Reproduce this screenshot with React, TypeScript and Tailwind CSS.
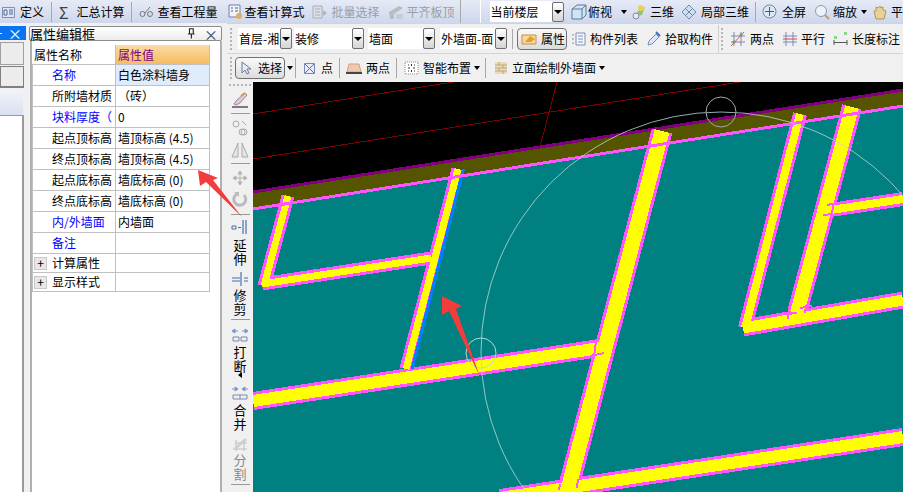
import type { ReactNode } from 'react'
import clsx from 'clsx'

const Sep = ({ className }: { className?: string }) => (
  <div className={clsx('w-px h-[20px] shrink-0 bg-[#a8a8a8]', className)} />
)

const Grip = ({ className }: { className?: string }) => (
  <div className={clsx('flex flex-col gap-[2px] shrink-0 w-[3px]', className)}>
    {[0, 1, 2, 3, 4, 5].map((i) => (
      <div key={i} className="size-[2px] bg-[#b4b4b4]" />
    ))}
  </div>
)

const Ico = ({ w = 16, children, className }: { w?: number; children: ReactNode; className?: string }) => (
  <svg width={w} height={16} viewBox={`0 0 ${w} 16`} className={clsx('shrink-0', className)} fill="none">
    {children}
  </svg>
)

const Caret = ({ className }: { className?: string }) => (
  <div className={clsx('shrink-0 border-x-[3px] border-t-[4px] border-x-transparent border-t-black', className)} />
)

const Combo = ({ label, width, className }: { label: string; width: string; className?: string }) => (
  <div className={clsx('flex items-center shrink-0', className)}>
    <div className={clsx('h-[21px] bg-white flex items-center pl-[1px] overflow-hidden whitespace-nowrap', width)}>{label}</div>
    <div className="w-[12px] h-[21px] border border-[#707070] rounded-[2px] bg-gradient-to-b from-white to-[#d4d4d4] flex items-center justify-center">
      <Caret className="border-x-[4px]" />
    </div>
  </div>
)

const rows: { name: string; value: string; blue?: boolean; h: string; plus?: boolean; tint?: boolean }[] = [
  { name: '名称', value: '白色涂料墙身', blue: true, h: 'h-[21px]', tint: true },
  { name: '所附墙材质', value: '（砖）', h: 'h-[21px]' },
  { name: '块料厚度（', value: '0', blue: true, h: 'h-[21px]' },
  { name: '起点顶标高', value: '墙顶标高 (4.5)', h: 'h-[21px]' },
  { name: '终点顶标高', value: '墙顶标高 (4.5)', h: 'h-[21px]' },
  { name: '起点底标高', value: '墙底标高 (0)', h: 'h-[21px]' },
  { name: '终点底标高', value: '墙底标高 (0)', h: 'h-[21px]' },
  { name: '内/外墙面', value: '内墙面', blue: true, h: 'h-[21px]' },
  { name: '备注', value: '', blue: true, h: 'h-[21px]' },
  { name: '计算属性', value: '', h: 'h-[19px]', plus: true },
  { name: '显示样式', value: '', h: 'h-[19px]', plus: true },
]

const PropertyTable = () => (
  <div className="w-[178px] border-r border-[#c0c0c0] text-[12px] leading-none">
    <div className="flex h-[20px] border-b border-[#c0c0c0]">
      <div className="w-[84px] pl-[2px] flex items-center border-r border-[#c0c0c0]">属性名称</div>
      <div className="flex-1 pl-[2px] flex items-center text-[#800080] bg-gradient-to-b from-[#fbdca4] to-[#f4bd5f]">属性值</div>
    </div>
    {rows.map((r) => (
      <div key={r.name} className={clsx('flex border-b border-[#c0c0c0] border-l', r.h)}>
        <div className={clsx('w-[83px] shrink-0 flex items-center border-r border-[#c0c0c0] overflow-hidden whitespace-nowrap', r.plus ? 'pl-[1px]' : 'pl-[19px]', r.blue && 'text-[#0000ff]')}>
          {r.plus && (
            <div className="size-[13px] mr-[5px] shrink-0 bg-[#e8e8e8] border border-[#c8c8c8] flex items-center justify-center text-[12px]">+</div>
          )}
          {r.name}
        </div>
        <div className={clsx('flex-1 pl-[2px] flex items-center whitespace-nowrap', r.tint && 'bg-[#deecfb]')}>{r.value}</div>
      </div>
    ))}
  </div>
)

const SideText = ({ text, dim, className }: { text: string; dim?: boolean; className?: string }) => (
  <div className={clsx('w-[13px] text-[13px] leading-[14px] text-center', dim && 'text-[#8a8a8a]', className)}>{text}</div>
)

const SideSep = ({ className }: { className?: string }) => <div className={clsx('w-[19px] h-px shrink-0 bg-[#9a9a9a]', className)} />

const SideToolbar = () => (
  <div className="w-[26px] shrink-0 flex flex-col items-center bg-[#f0f0f0]">
    <div className="mt-[2px] flex gap-[2px]">
      {[0, 1, 2, 3, 4, 5].map((i) => (
        <div key={i} className="size-[2px] bg-[#b4b4b4]" />
      ))}
    </div>
    <Ico w={18} className="mt-[6px]">
      <path d="M3 12l3-4 8-7 2 2-7 8-4 2z" fill="#e9c7d2" stroke="#8a8aa8" />
      <path d="M1 15h16" stroke="#555" strokeWidth="1.5" />
      <path d="M10 4l4-3" stroke="#c8a040" strokeWidth="2" />
    </Ico>
    <SideSep className="mt-[5px]" />
    <Ico w={18} className="mt-[6px]">
      <circle cx="5" cy="4" r="3" stroke="#aaa" />
      <circle cx="11" cy="12" r="3" stroke="#aaa" />
      <circle cx="13" cy="12" r="3" stroke="#aaa" />
      <path d="M11 1l4 4" stroke="#aaa" />
    </Ico>
    <Ico w={18} className="mt-[6px]">
      <path d="M7 1L1 15h6zM11 1l6 14h-6z" stroke="#aaa" fill="#e4e4e4" />
    </Ico>
    <SideSep className="mt-[5px]" />
    <Ico w={16} className="mt-[6px]">
      <path d="M8 1v14M1 8h14M8 1L6 4h4zM8 15l-2-3h4zM1 8l3-2v4zM15 8l-3-2v4z" stroke="#b4b4b4" fill="#b4b4b4" />
    </Ico>
    <Ico w={16} className="mt-[5px]">
      <path d="M5 3a6 6 0 1 0 7 1" stroke="#bbb" strokeWidth="3" />
      <path d="M2 1h5v5z" fill="#bbb" />
    </Ico>
    <SideSep className="mt-[7px]" />
    <Ico w={18} className="mt-[4px]">
      <path d="M1 7h4v3H1zM7 8.5h3" stroke="#4a6aa8" />
      <path d="M12 1v14M15 1v14" stroke="#6a8ac0" strokeWidth="1.5" />
    </Ico>
    <SideText text="延伸" className="mt-[3px]" />
    <Ico w={18} className="mt-[5px]">
      <path d="M1 7h8M1 10h8M13 7h4M13 10h4" stroke="#4a6aa8" />
      <path d="M10 1v14" stroke="#6a8ac0" strokeWidth="1.5" />
    </Ico>
    <SideText text="修剪" className="mt-[1px]" />
    <SideSep className="mt-[3px]" />
    <Ico w={18} className="mt-[8px]">
      <path d="M1 3h6M17 3h-6M1 3l3-2v4zM17 3l-3-2v4z" stroke="#7a9ad0" fill="#7a9ad0" />
      <path d="M2 9h6v4H2zM10 9h6v4h-6z" stroke="#7a8ab0" />
    </Ico>
    <SideText text="打断" className="mt-[1px]" />
    <div className="size-0 border-y-[3px] border-r-[4px] border-y-transparent border-r-black -mt-[1px]" />
    <Ico w={18} className="mt-[8px]">
      <path d="M1 3h6M17 3h-6M7 3L4 1v4zM11 3l3-2v4z" stroke="#7a9ad0" fill="#7a9ad0" />
      <path d="M2 9h14v4H2zM9 9v4" stroke="#7a8ab0" />
    </Ico>
    <SideText text="合并" className="mt-[1px]" />
    <Ico w={18} className="mt-[5px]">
      <path d="M2 13h14M4 7h12M5 4v11M13 4v11" stroke="#c0c0c0" />
      <path d="M3 12L14 2l2 2-9 8z" fill="#cfcfcf" />
    </Ico>
    <SideText text="分割" dim className="mt-[1px]" />
    <SideSep className="mt-[3px]" />
  </div>
)

const walls: { pts: [number, number, number, number]; outer: number; inner: number }[] = [
  { pts: [288, 195, 264, 285], outer: 13, inner: 7 },
  { pts: [262, 283, 431, 257], outer: 13, inner: 7 },
  { pts: [458, 168, 406, 368], outer: 13, inner: 7 },
  { pts: [253, 400, 606, 346], outer: 18, inner: 12 },
  { pts: [662, 130, 567, 492], outer: 21, inner: 15 },
  { pts: [500, 497, 903, 436], outer: 18, inner: 12 },
  { pts: [800, 113, 745, 327], outer: 14, inner: 8 },
  { pts: [852, 106, 797, 312], outer: 20, inner: 14 },
  { pts: [743, 327, 903, 299], outer: 17, inner: 11 },
  { pts: [824, 210, 903, 198], outer: 14, inner: 8 },
]

const ticks = 'M590 355L604 352M596 340L594 356M800 307L812 305M806 304L805 312M788 313L797 312M788 313V318M827 204L837 202M823 214L833 213M833 203L832 215M560 483L559 489M578 478L577 487'

const Canvas = () => (
  <div className="flex-1 bg-black overflow-hidden">
    <svg width={650} height={411} viewBox="253 81 650 411" shapeRendering="crispEdges" className="block">
      <path d="M253 113L453 81M253 158L740 81M557 81L540 146" stroke="#800000" />
      <path d="M253 191L903 89V500H253z" fill="#008080" />
      <path d="M253 191L903 89V105L253 208z" fill="#555500" />
      <path d="M253 191L903 89" stroke="#800080" strokeWidth="3" />
      {walls.map(({ pts: [x1, y1, x2, y2], outer }) => (
        <line key={`${x1}-${y1}-o`} x1={x1} y1={y1} x2={x2} y2={y2} stroke="#ff55ff" strokeWidth={outer} />
      ))}
      {walls.map(({ pts: [x1, y1, x2, y2], inner }) => (
        <line key={`${x1}-${y1}-i`} x1={x1} y1={y1} x2={x2} y2={y2} stroke="#ffff00" strokeWidth={inner} />
      ))}
      <line x1={463.5} y1={168} x2={412} y2={368} stroke="#0080ff" strokeWidth={3} />
      <path d="M253 208L903 105" stroke="#ff55ff" strokeWidth="3" />
      <path d={ticks} stroke="#ff55ff" strokeWidth="2" />
      <g shapeRendering="auto">
        <circle cx={721} cy={351} r={240} stroke="#b8d8d8" fill="none" strokeWidth={0.8} />
        <circle cx={721} cy={111} r={15} stroke="#a8a8a8" fill="none" />
        <circle cx={481} cy={352} r={15} stroke="#b8d8d8" fill="none" />
      </g>
    </svg>
  </div>
)

const Arrows = () => (
  <svg width={903} height={492} viewBox="0 0 903 492" className="absolute left-0 top-0 pointer-events-none">
    <path d="M198 170L200 186L206 182L242 217L213 180L218 178z" fill="#f33c3c" />
    <path d="M442 296L442 315L449 311L480 377L456 309L462 306z" fill="#f33c3c" />
  </svg>
)

export default function App() {
  return (
    <div className="relative w-[903px] h-[492px] overflow-hidden bg-[#f0f0f0] text-[12px] leading-none text-black [font-family:'Noto_Sans_CJK_SC',sans-serif]">
      {/* top menu bar */}
      <div className="h-[23px] flex items-center bg-gradient-to-b from-[#e6eaf6] to-[#cfd7ec] whitespace-nowrap">
        <Ico w={13} className="ml-[2px]">
          <path d="M0.5 3.5h12v10h-12z" fill="#dfe6f4" stroke="#8090b0" />
          <path d="M7 6h4M7 8h4M7 10h4M2 6h3v5H2z" stroke="#506890" />
        </Ico>
        <span className="ml-[5px]">定义</span>
        <Sep className="ml-[7px]" />
        <span className="ml-[7px] w-[11px] text-[16px] text-[#404040]">Σ</span>
        <span className="ml-[7px]">汇总计算</span>
        <Sep className="ml-[6px]" />
        <Ico w={14} className="ml-[7px]">
          <circle cx="3.5" cy="10" r="2.5" stroke="#777" />
          <circle cx="11" cy="10" r="2.5" stroke="#777" />
          <path d="M6 9l5-6" stroke="#777" />
        </Ico>
        <span className="ml-[5px]">查看工程量</span>
        <Ico w={18} className="ml-[8px]">
          <path d="M3 1h11v12H3z" fill="#eef2fa" stroke="#7080a8" />
          <path d="M5 4h2M9 4h3M5 7h2M9 7h3" stroke="#606060" />
          <circle cx="13" cy="12" r="3" fill="#e0b060" />
        </Ico>
        <span className="ml-px">查看计算式</span>
        <Ico w={16} className="ml-[7px]">
          <path d="M1 2h9v12H1z" fill="#dcdfe8" stroke="#a8adb8" />
          <path d="M3 5h5M3 8h5M3 11h5" stroke="#a8adb8" />
          <path d="M11 6l4 3-4 3z" fill="#b0b4bc" />
        </Ico>
        <span className="ml-[4px] text-[#9a9ea8]">批量选择</span>
        <Ico w={17} className="ml-[8px]">
          <path d="M1 8l10-6 4 2-9 6v5H2z" fill="#b8bcc4" />
          <path d="M8 10h7v5H8z" fill="#c8ccd4" />
        </Ico>
        <span className="ml-[2px] text-[#9a9ea8]">平齐板顶</span>
        <Sep className="ml-[5px] h-[23px]" />
        <div className="ml-[19px] w-px h-[23px] bg-white" />
        <div className="ml-[9px] h-[21px] w-[66px] bg-white flex items-center pl-px">当前楼层</div>
        <div className="w-[12px] h-[20px] border border-[#707070] rounded-[2px] bg-gradient-to-b from-white to-[#d4d4d4] flex items-center justify-center">
          <Caret className="border-x-[4px]" />
        </div>
        <Ico w={16} className="ml-[7px]">
          <path d="M1 5l5-4h9v10l-4 4H1z" fill="#cfe4f4" stroke="#5a7a98" />
          <path d="M1 5h10v10M11 5l4-4" stroke="#5a7a98" />
        </Ico>
        <span className="ml-px">俯视</span>
        <Caret className="ml-[9px]" />
        <Ico w={16} className="ml-[4px]">
          <path d="M2 13L8 6l6-3-3 8z" fill="#8cc878" />
          <circle cx="10" cy="4" r="3" fill="#f0d050" />
          <circle cx="5" cy="12" r="3" fill="#e8e8e8" stroke="#88a" />
        </Ico>
        <span className="ml-[3px]">三维</span>
        <Ico w={16} className="ml-[7px]">
          <path d="M8 1l7 7-7 7-7-7z" fill="#cfe0f0" stroke="#6a8aa8" />
          <path d="M4.5 4.5l7 7M11.5 4.5l-7 7" stroke="#6a8aa8" />
        </Ico>
        <span className="ml-[4px]">局部三维</span>
        <Sep className="ml-[6px]" />
        <Ico w={16} className="ml-[6px]">
          <circle cx="7.5" cy="7.5" r="6.5" fill="#dce8f6" stroke="#6a88a8" />
          <path d="M7.5 3v9M3 7.5h9" stroke="#3a5a98" />
        </Ico>
        <span className="ml-[4px]">全屏</span>
        <Ico w={16} className="ml-[8px]">
          <circle cx="7" cy="7" r="5.5" fill="#eef2f8" stroke="#8a9ab0" />
          <path d="M11 11l4 4" stroke="#c8a050" strokeWidth="2" />
        </Ico>
        <span className="ml-[3px]">缩放</span>
        <Caret className="ml-[4px]" />
        <Ico w={16} className="ml-[5px]">
          <path d="M2 7l2 8h8l2-8-3-1V3l-2 1-1-2-2 2-2-1v4z" fill="#e8d098" stroke="#b09858" />
        </Ico>
        <span className="ml-[3px]">平</span>
      </div>

      <div className="flex h-[469px]">
        {/* docked panels on the left */}
        <div className="w-[26px] shrink-0 pt-[3px] flex flex-col">
          <div className="h-[14px] bg-[#0a74f0] flex items-center justify-between pr-[4px] text-white text-[14px]">
            <div className="w-[2px] h-px bg-white" />
            ×
          </div>
          <div className="mt-[2px] h-[23px] w-[24px] bg-[#ececec] border border-[#a0a0a0]" />
          <div className="mt-px h-[22px] w-[24px] bg-[#ececec] border border-[#808080] border-b-2" />
          <div className="mt-px h-[26px] w-[23px] bg-gradient-to-b from-[#f2f4f9] to-[#d9e0f0]" />
          <div className="flex-1 w-[24px] bg-white border-r-2 border-t border-[#9a9a9a]" />
        </div>

        {/* property panel */}
        <div className="w-[199px] shrink-0 pt-[3px] flex flex-col ml-[3px]">
          <div className="h-[15px] w-[193px] border border-[#8c8c8c] rounded-[2px] bg-gradient-to-b from-white to-[#ececec] flex items-center text-[13px]">
            <span>属性编辑框</span>
            <Ico w={10} className="ml-auto scale-75">
              <path d="M3 1h5v7H3zM1 8h9M5.5 8v6" stroke="#222" strokeWidth="1.5" />
            </Ico>
            <span className="ml-[8px] mr-[3px] text-[14px] text-[#444]">×</span>
          </div>
          <div className="flex-1 w-[192px] ml-px pt-[4px] bg-white border-x-2 border-[#b0b0b0]">
            <PropertyTable />
          </div>
        </div>

        {/* drawing area */}
        <div className="flex-1 min-w-0 flex flex-col ml-[-1px]">
          <div className="h-[31px] flex items-center border-t border-b border-[#d4d4d4] bg-[#f0f0f0] text-[12px] whitespace-nowrap">
            <Grip className="ml-[3px]" />
            <Combo label="首层-湘" width="w-[42px]" className="ml-[5px]" />
            <Combo label="装修" width="w-[58px]" className="ml-[2px]" />
            <Combo label="墙面" width="w-[55px]" className="ml-[4px]" />
            <Combo label="外墙面-面" width="w-[55px]" className="ml-[5px]" />
            <Sep className="ml-[5px]" />
            <div className="ml-[4px] h-[22px] w-[50px] shrink-0 flex items-center border border-[#707070] rounded-[4px] bg-gradient-to-b from-[#fafafa] to-[#dcdcdc]">
              <Ico w={17} className="ml-[3px]">
                <path d="M1 4h14v9H1z" fill="#f8d8a0" stroke="#c89040" />
                <path d="M4 11l5-6 5 3-4 3z" fill="#e0a030" />
              </Ico>
              <span className="ml-[3px]">属性</span>
            </div>
            <Ico w={15} className="ml-[4px]">
              <path d="M5 2h9v12H5z" fill="#f4f7fc" stroke="#7a90b8" />
              <path d="M7 5h5M7 8h5M7 11h5M1 4h2M1 8h2M1 12h2" stroke="#7a90b8" />
            </Ico>
            <span className="ml-[4px]">构件列表</span>
            <Ico w={15} className="ml-[8px]">
              <path d="M2 14l1-4 7-7 3 3-7 7z" fill="#dce8f8" stroke="#6a90c8" />
              <path d="M10 1l4 4" stroke="#4a70b0" strokeWidth="2" />
            </Ico>
            <span className="ml-[4px]">拾取构件</span>
            <Sep className="ml-[5px] h-[28px] bg-[#d0d0d0]" />
            <Grip className="ml-[2px]" />
            <Ico w={15} className="ml-[6px]">
              <path d="M4 1v14M11 1v14M1 5h14M1 11h14" stroke="#7a8ab8" />
              <path d="M1 15L14 1" stroke="#e05050" />
              <circle cx="4" cy="11" r="1.5" fill="#7a9a50" />
              <circle cx="11" cy="4" r="1.5" fill="#7a9a50" />
            </Ico>
            <span className="ml-[5px]">两点</span>
            <Ico w={15} className="ml-[8px]">
              <path d="M4 1v14M11 1v14M1 5h14M1 11h14" stroke="#7a8ab8" />
              <path d="M1 8h14" stroke="#d04848" />
            </Ico>
            <span className="ml-[4px]">平行</span>
            <Ico w={15} className="ml-[8px]">
              <path d="M1 9v5M14 9v5M1 11.5h13" stroke="#555" />
              <path d="M1 5h3v3H1zM11 1h3v3h-3z" fill="#88d888" />
            </Ico>
            <span className="ml-[4px]">长度标注</span>
          </div>

          <div className="h-[28px] flex items-center bg-[#f0f0f0] whitespace-nowrap">
            <Grip className="ml-[3px]" />
            <div className="ml-[2px] h-[22px] w-[50px] shrink-0 flex items-center border border-[#707070] rounded-[4px] bg-gradient-to-b from-[#fafafa] to-[#dcdcdc]">
              <svg width={10} height={14} viewBox="0 0 10 14" className="ml-[5px] shrink-0">
                <path d="M1 1v11l3-3 2 4 2-1-2-4h4z" fill="#e8eef8" stroke="#6a7a98" />
              </svg>
              <span className="ml-[7px]">选择</span>
            </div>
            <Caret className="ml-[2px]" />
            <Sep className="ml-[2px]" />
            <Ico w={11} className="ml-[8px]">
              <path d="M0.5 3.5h10v10h-10z" fill="#e8ecf8" stroke="#7a8ab8" />
              <path d="M1 4l9 9M10 4l-9 9" stroke="#c05050" />
            </Ico>
            <span className="ml-[6px]">点</span>
            <Sep className="ml-[6px]" />
            <Ico w={16} className="ml-[6px]">
              <path d="M3 4h10l2 8H1z" fill="#f0c8b0" stroke="#d0a088" />
              <path d="M0 13h16" stroke="#444" strokeWidth="2" />
            </Ico>
            <span className="ml-[4px]">两点</span>
            <Sep className="ml-[6px]" />
            <Ico w={15} className="ml-[7px]">
              <path d="M1 2h13v12H1z" fill="#fff" stroke="#8a8a8a" strokeDasharray="1 1" />
              <path d="M7.5 4v2M7.5 10v2M4 8h2M9 8h2M4 5h1M10 5h1M4 11h1M10 11h1" stroke="#334" />
            </Ico>
            <span className="ml-[4px]">智能布置</span>
            <Caret className="ml-[3px]" />
            <Sep className="ml-[5px]" />
            <Ico w={14} className="ml-[8px]">
              <path d="M1 2h12v12H1z" fill="#eadcb8" />
              <path d="M1 5h12M1 8h12M1 11h12M5 2v3M9 5v3M5 8v3M9 11v3" stroke="#b8a880" />
            </Ico>
            <span className="ml-[4px]">立面绘制外墙面</span>
            <Caret className="ml-[3px]" />
          </div>

          <div className="flex-1 flex min-h-0">
            <SideToolbar />
            <Canvas />
          </div>
        </div>
      </div>

      <Arrows />
    </div>
  )
}
